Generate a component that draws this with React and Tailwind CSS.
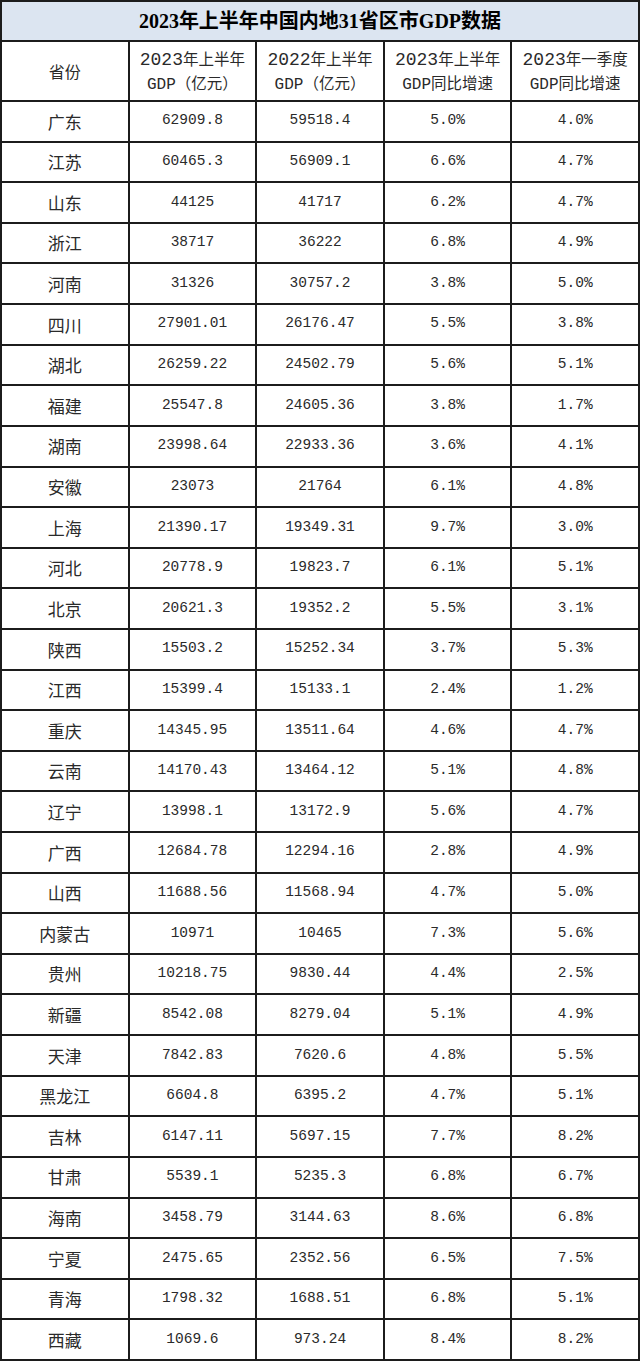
const rows = [
  ["广东", "62909.8", "59518.4", "5.0%", "4.0%"],
  ["江苏", "60465.3", "56909.1", "6.6%", "4.7%"],
  ["山东", "44125", "41717", "6.2%", "4.7%"],
  ["浙江", "38717", "36222", "6.8%", "4.9%"],
  ["河南", "31326", "30757.2", "3.8%", "5.0%"],
  ["四川", "27901.01", "26176.47", "5.5%", "3.8%"],
  ["湖北", "26259.22", "24502.79", "5.6%", "5.1%"],
  ["福建", "25547.8", "24605.36", "3.8%", "1.7%"],
  ["湖南", "23998.64", "22933.36", "3.6%", "4.1%"],
  ["安徽", "23073", "21764", "6.1%", "4.8%"],
  ["上海", "21390.17", "19349.31", "9.7%", "3.0%"],
  ["河北", "20778.9", "19823.7", "6.1%", "5.1%"],
  ["北京", "20621.3", "19352.2", "5.5%", "3.1%"],
  ["陕西", "15503.2", "15252.34", "3.7%", "5.3%"],
  ["江西", "15399.4", "15133.1", "2.4%", "1.2%"],
  ["重庆", "14345.95", "13511.64", "4.6%", "4.7%"],
  ["云南", "14170.43", "13464.12", "5.1%", "4.8%"],
  ["辽宁", "13998.1", "13172.9", "5.6%", "4.7%"],
  ["广西", "12684.78", "12294.16", "2.8%", "4.9%"],
  ["山西", "11688.56", "11568.94", "4.7%", "5.0%"],
  ["内蒙古", "10971", "10465", "7.3%", "5.6%"],
  ["贵州", "10218.75", "9830.44", "4.4%", "2.5%"],
  ["新疆", "8542.08", "8279.04", "5.1%", "4.9%"],
  ["天津", "7842.83", "7620.6", "4.8%", "5.5%"],
  ["黑龙江", "6604.8", "6395.2", "4.7%", "5.1%"],
  ["吉林", "6147.11", "5697.15", "7.7%", "8.2%"],
  ["甘肃", "5539.1", "5235.3", "6.8%", "6.7%"],
  ["海南", "3458.79", "3144.63", "8.6%", "6.8%"],
  ["宁夏", "2475.65", "2352.56", "6.5%", "7.5%"],
  ["青海", "1798.32", "1688.51", "6.8%", "5.1%"],
  ["西藏", "1069.6", "973.24", "8.4%", "8.2%"],
];

const cjk = "font-['Noto_Sans_CJK_SC',sans-serif]";
const mono = "font-['Liberation_Mono','Noto_Sans_CJK_SC',monospace]";

function HeadCell({ year, tail, sub }) {
  return (
    <div className="flex flex-col items-center justify-center bg-white text-[#2a2a2a] leading-[22px]">
      <div className="whitespace-nowrap">
        <span className={`${mono} text-[18px]`}>{year}</span>
        <span className={`${cjk} text-[15.5px]`}>{tail}</span>
      </div>
      <div className="whitespace-nowrap">
        <span className={`${mono} text-[16px]`}>GDP</span>
        <span className={`${cjk} text-[15.5px]`}>{sub}</span>
      </div>
    </div>
  );
}

export default function App() {
  return (
    <div className="w-[640px] h-[1361px] bg-[#1c1c1c] p-[2px]">
      <div className="grid h-full grid-cols-5 grid-rows-[38px_58px_repeat(31,minmax(0,1fr))] gap-[2px]">
        {/* title */}
        <div className="col-span-5 flex items-center justify-center bg-[#dce5f1] font-['Liberation_Serif','Noto_Sans_CJK_SC',serif] text-[20px] font-bold text-black">
          2023年上半年中国内地31省区市GDP数据
        </div>

        {/* header */}
        <div className={`flex items-center justify-center bg-white text-[16px] text-[#2a2a2a] ${cjk}`}>省份</div>
        <HeadCell year="2023" tail="年上半年" sub="（亿元）" />
        <HeadCell year="2022" tail="年上半年" sub="（亿元）" />
        <HeadCell year="2023" tail="年上半年" sub="同比增速" />
        <HeadCell year="2023" tail="年一季度" sub="同比增速" />

        {/* data */}
        {rows.map((r) => (
          <div key={r[0]} className="contents">
            <div className={`flex items-center justify-center bg-white text-[17px] text-[#2a2a2a] ${cjk}`}>{r[0]}</div>
            {r.slice(1).map((v, i) => (
              <div key={i} className={`flex items-center justify-center bg-white text-[14.5px] text-[#2a2a2a] ${mono}`}>
                {v}
              </div>
            ))}
          </div>
        ))}
      </div>
    </div>
  );
}
